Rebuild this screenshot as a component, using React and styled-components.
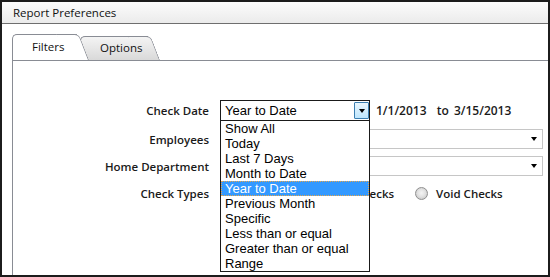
import styled, { createGlobalStyle } from 'styled-components';

const GlobalStyle = createGlobalStyle`
  html, body {
    margin: 0;
    padding: 0;
    background: #ffffff;
  }
`;

const UI_FONT = `'Open Sans', 'Noto Sans', 'Liberation Sans', sans-serif`;
const LIST_FONT = `'Liberation Sans', Arial, sans-serif`;

const Frame = styled.div`
  box-sizing: border-box;
  width: 550px;
  height: 277px;
  border: 2px solid #1c1c1c;
  display: flex;
  flex-direction: column;
  overflow: hidden;
  font-family: ${UI_FONT};
  color: #1a1a1a;
`;

const TitleBar = styled.div`
  height: 21px;
  flex: none;
  display: flex;
  align-items: center;
  padding-left: 11px;
  border-bottom: 1px solid #6e6e6e;
  background: linear-gradient(#fcfcfc, #ebebeb);
  font-size: 11.5px;
  color: #111;
`;

const Body = styled.div`
  flex: 1;
  display: flex;
  flex-direction: column;
  padding: 10px 0 0 10px;
`;

const TabStrip = styled.div`
  height: 26px;
  flex: none;
  display: flex;
  align-items: flex-end;
`;

// tab with a square left side and a slanted right side
const Tab = styled.div`
  position: relative;
  z-index: ${(p) => (p.$active ? 2 : 1)};
  width: ${(p) => p.$w}px;
  height: ${(p) => (p.$active ? 26 : 24)}px;
  box-sizing: border-box;
  display: flex;
  align-items: center;
  padding: 0 0 1px ${(p) => (p.$active ? 20 : 20)}px;
  margin-left: ${(p) => (p.$active ? 0 : -9)}px;
  font-size: 11.5px;
  color: #111;

  &::before,
  &::after {
    content: '';
    position: absolute;
    z-index: -1;
    top: 0;
    bottom: 0;
    border: 1px solid #898c94;
    border-bottom: none;
    background: ${(p) => (p.$active ? '#ffffff' : 'linear-gradient(#f4f4f4, #d9d9d9)')};
  }
  &::before {
    left: 0;
    right: 12px;
    border-right: none;
    border-top-left-radius: 5px;
  }
  &::after {
    right: 0;
    width: 22px;
    border-left: none;
    border-top-right-radius: 5px;
    transform: skewX(21deg);
    transform-origin: bottom left;
  }
`;

const Panel = styled.div`
  flex: 1;
  border-top: 1px solid #898c94;
  border-left: 1px solid #898c94;
  padding: 39px 5px 0 0;
`;

const Row = styled.div`
  display: flex;
  align-items: center;
  height: ${(p) => p.$h}px;
  margin-bottom: ${(p) => p.$gap || 0}px;
`;

const Label = styled.div`
  width: 196px;
  margin-right: 11px;
  flex: none;
  text-align: right;
  font-size: 11.5px;
  font-weight: 600;
  white-space: nowrap;
`;

const ComboWrap = styled.div`
  position: relative;
  z-index: 5;
  width: 150px;
  height: 100%;
  flex: none;
`;

const Combo = styled.div`
  box-sizing: border-box;
  height: 100%;
  display: flex;
  align-items: stretch;
  padding: 1px 0;
  border: 1px solid #1a1a1a;
  background: #fff;
  font-family: ${LIST_FONT};
  font-size: 13px;
  color: #000;
`;

const ComboText = styled.div`
  flex: 1;
  display: flex;
  align-items: center;
  padding-left: 4px;
`;

const ComboButton = styled.div`
  box-sizing: border-box;
  width: 15px;
  display: flex;
  align-items: center;
  justify-content: center;
  border: 1px solid #3c7fb1;
  border-radius: 1px;
  background: linear-gradient(#eaf6fd, #bee6fd);
`;

const Caret = styled.span`
  width: 0;
  height: 0;
  border-left: 3.5px solid transparent;
  border-right: 3.5px solid transparent;
  border-top: 4px solid #000;
`;

const List = styled.ul`
  position: absolute;
  top: 100%;
  left: 0;
  box-sizing: border-box;
  width: 150px;
  margin: 0;
  padding: 0;
  list-style: none;
  background: #fff;
  border: 1px solid #1a1a1a;
  border-top: none;
  font-family: ${LIST_FONT};
  font-size: 13px;
  color: #000;
`;

const Item = styled.li`
  box-sizing: border-box;
  height: 15px;
  line-height: 13px;
  padding-left: 3px;
  white-space: nowrap;
  border: 1px dotted transparent;
  ${(p) =>
    p.$selected &&
    `
    background: #3399ff;
    color: #ffffff;
    border-color: #e7a64a;
  `}
`;

const DateRange = styled.div`
  margin-left: 6px;
  font-size: 12px;
  font-weight: 600;
  word-spacing: 2px;
  white-space: pre;
`;

const Select = styled.div`
  box-sizing: border-box;
  flex: 1;
  height: 100%;
  display: flex;
  align-items: center;
  justify-content: flex-end;
  padding-right: 5px;
  border: 1px solid #c6c6c6;
  background: #fff;
`;

const RadioGroup = styled.div`
  display: flex;
  align-items: center;
  gap: 21px;
`;

const RadioOption = styled.label`
  display: flex;
  align-items: center;
  gap: 8px;
  font-size: 11.5px;
  font-weight: 600;
  white-space: nowrap;
`;

const Radio = styled.span`
  box-sizing: border-box;
  width: 13px;
  height: 13px;
  border-radius: 50%;
  border: 1px solid #8f8f8f;
  background: radial-gradient(circle at 50% 45%, #f4f4f4 0%, #e2e2e2 45%, #bdbdbd 100%);
`;

const ranges = [
  'Show All',
  'Today',
  'Last 7 Days',
  'Month to Date',
  'Year to Date',
  'Previous Month',
  'Specific',
  'Less than or equal',
  'Greater than or equal',
  'Range',
];

export default function App() {
  const selected = 'Year to Date';
  return (
    <>
      <GlobalStyle />
      <Frame>
        <TitleBar>Report Preferences</TitleBar>
        <Body>
          <TabStrip>
            <Tab $active $w={77}>
              Filters
            </Tab>
            <Tab $w={80}>Options</Tab>
          </TabStrip>
          <Panel>
            <Row $h={21} $gap={8}>
              <Label>Check Date</Label>
              <ComboWrap>
                <Combo>
                  <ComboText>{selected}</ComboText>
                  <ComboButton>
                    <Caret />
                  </ComboButton>
                </Combo>
                <List>
                  {ranges.map((r) => (
                    <Item key={r} $selected={r === selected}>
                      {r}
                    </Item>
                  ))}
                </List>
              </ComboWrap>
              <DateRange>1/1/2013  to 3/15/2013</DateRange>
            </Row>
            <Row $h={20} $gap={7}>
              <Label>Employees</Label>
              <Select>
                <Caret />
              </Select>
            </Row>
            <Row $h={20} $gap={8}>
              <Label>Home Department</Label>
              <Select>
                <Caret />
              </Select>
            </Row>
            <Row $h={18}>
              <Label>Check Types</Label>
              <RadioGroup>
                <RadioOption>
                  <Radio />
                  Both
                </RadioOption>
                <RadioOption>
                  <Radio />
                  Regular Checks
                </RadioOption>
                <RadioOption>
                  <Radio />
                  Void Checks
                </RadioOption>
              </RadioGroup>
            </Row>
          </Panel>
        </Body>
      </Frame>
    </>
  );
}
